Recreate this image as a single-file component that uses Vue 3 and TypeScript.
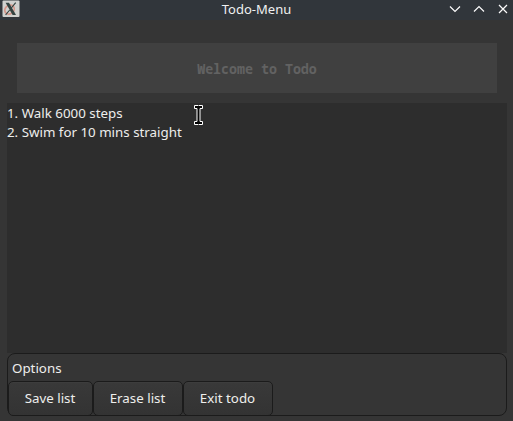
<script setup lang="ts">
const items: string[] = ['Walk 6000 steps', 'Swim for 10 mins straight']
const actions = [
  { label: 'Save list', kind: 'save' },
  { label: 'Erase list', kind: 'erase' },
  { label: 'Exit todo', kind: 'exit' },
]
</script>

<template>
  <div class="window">
    <header class="titlebar">
      <svg class="logo" width="18" height="17" viewBox="0 0 18 17">
        <rect x=".5" y=".5" width="17" height="16.5" rx="1" fill="#d0d1cf" />
        <ellipse cx="7.5" cy="9.6" rx="5" ry="4.2" fill="none" stroke="#d5978a" stroke-width="1.7" transform="rotate(-35 7.5 9.6)" />
        <path d="M13.7 2.6 9.4 7.9M7.7 10 3.6 14.9" stroke="#344341" stroke-width="1.1" />
        <path d="M3.6 2.8h3.4l7 12.2h-3.4z" fill="#344341" />
      </svg>
      <h1>Todo-Menu</h1>
      <nav>
        <svg width="12" height="12" viewBox="0 0 12 12"><path d="M1 3.5 6 8.5 11 3.5" /></svg>
        <svg width="12" height="12" viewBox="0 0 12 12"><path d="M1 8.5 6 3.5 11 8.5" /></svg>
        <svg width="12" height="12" viewBox="0 0 12 12"><path d="M2 2 10 10M10 2 2 10" /></svg>
      </nav>
    </header>
    <div class="banner">Welcome to Todo</div>
    <main class="list">
      <div v-for="(item, i) in items" :key="item"><span>{{ i + 1 }}. {{ item }}</span></div>
      <svg class="cursor" width="9" height="20" viewBox="0 0 9 20">
        <path d="M.5 .5H4L4.5 1 5 .5H8.5V3.5H6V16.5H8.5V19.5H5L4.5 19 4 19.5H.5V16.5H3V3.5H.5Z" fill="#050505" stroke="#fff" stroke-width="1" />
      </svg>
    </main>
    <section class="options">
      <div class="caption">Options</div>
      <div class="buttons">
        <button v-for="a in actions" :key="a.kind" :class="a.kind">{{ a.label }}</button>
      </div>
    </section>
  </div>
</template>

<style>
body { background: #353535; overflow: hidden; }
</style>

<style scoped>
* { box-sizing: border-box; }
.window {
  width: 513px;
  height: 421px;
  background: #353535;
  color: #eeeeec;
  font: 13.33px/19px "Noto Sans", sans-serif;
  display: flex;
  flex-direction: column;
}
.titlebar {
  height: 20px;
  flex: none;
  margin-bottom: 23px;
  padding: 0 4px 0 2px;
  background: #31363b;
  display: grid;
  grid-template-columns: 62px 1fr 60px;
  align-items: start;
}
.logo { display: block; }
h1 { margin: 0; font-size: 13px; line-height: 18px; font-weight: 400; text-align: center; color: #eff0f1; }
nav { display: flex; gap: 12px; justify-content: flex-end; padding-top: 3px; }
nav svg { fill: none; stroke: #fcfcfc; stroke-width: 1.2; }
.banner {
  height: 50px;
  flex: none;
  margin: 0 16px 10px 17px;
  padding-top: 1px;
  background: #404040;
  color: #626262;
  font: bold 13.3px/50px "Noto Sans Mono", "DejaVu Sans Mono", monospace;
  text-align: center;
}
.list {
  position: relative;
  height: 250px;
  flex: none;
  margin: 0 6px 0 7px;
  padding-top: 1px;
  background: #2d2d2d;
}
.cursor { position: absolute; left: 187px; top: 2px; }
.options {
  height: 63px;
  flex: none;
  margin: 0 6px 0 7px;
  border: 1px solid #1b1b1b;
  border-radius: 8px;
}
.caption { height: 27px; padding: 5px 0 0 4px; }
.buttons { display: flex; }
button {
  height: 35px;
  padding: 0 1px 0 0;
  border: 1px solid #1b1b1b;
  border-radius: 5px;
  background: linear-gradient(#393939, #333);
  box-shadow: inset 0 1px #3d3d3d;
  color: inherit;
  font: inherit;
}
.save { width: 85px; }
.erase { width: 90px; }
.exit { width: 90px; }
</style>
